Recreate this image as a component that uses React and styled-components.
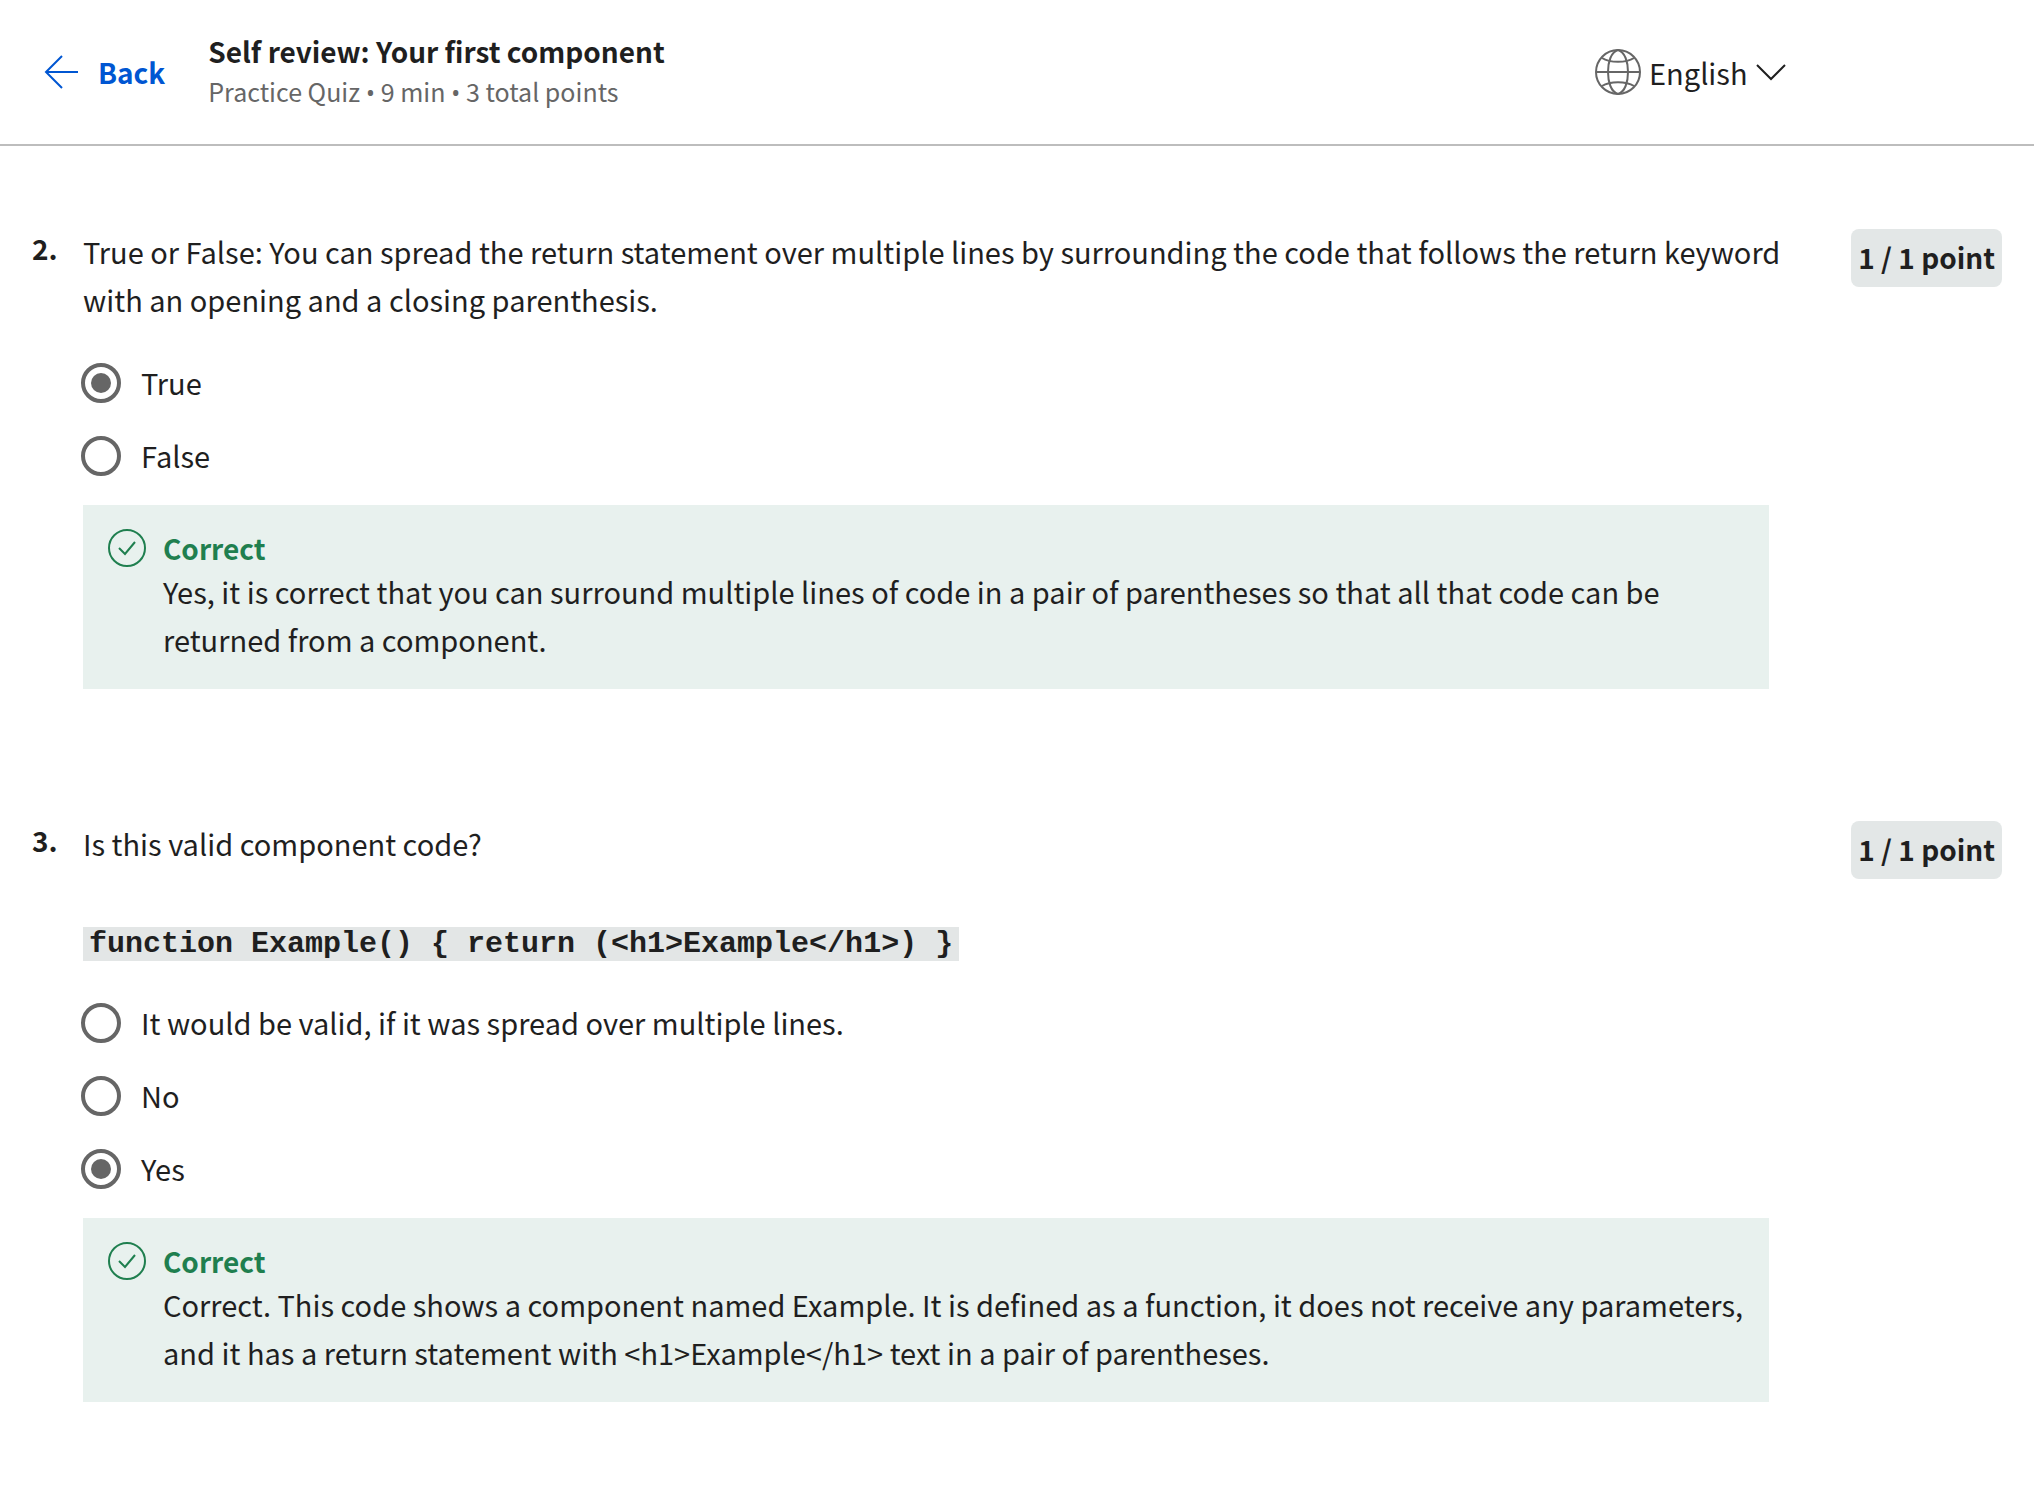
import React from "react";
import styled, { createGlobalStyle } from "styled-components";

const ink = "#1f1f1f";
const muted = "#666666";
const green = "#1f7f4f";

const GlobalStyle = createGlobalStyle`
  *, *::before, *::after { box-sizing: border-box; }
  body {
    margin: 0;
    background: #ffffff;
    color: ${ink};
    font-family: "Noto Sans CJK SC", "Noto Sans", sans-serif;
    font-size: 29px;
    line-height: 48px;
  }
`;

const Header = styled.header`
  display: flex;
  align-items: center;
  padding: 32px 248px 32px 44px;
  border-bottom: 2px solid #bdbdbd;
`;

const BackLink = styled.a`
  display: flex;
  align-items: center;
  gap: 18px;
  margin-right: 43px;
  color: #0056d2;
  font-size: 28px;
  font-weight: 600;
  text-decoration: none;
`;

const Heading = styled.div`
  flex: 1;
  min-width: 0;
`;

const Title = styled.h1`
  margin: 0;
  font-size: 28px;
  font-weight: 600;
  line-height: 38px;
`;

const Subtitle = styled.p`
  margin: 0;
  color: ${muted};
  font-size: 25px;
  line-height: 42px;
`;

const Bullet = styled.span`
  font-family: "Open Sans", sans-serif;
  line-height: 24px;
`;

const Language = styled.label`
  display: flex;
  align-items: center;
  gap: 8px;
`;

const SelectBox = styled.span`
  display: grid;
  align-items: center;
  justify-items: end;

  > * { grid-area: 1 / 1; }
  > svg { pointer-events: none; }
`;

const Select = styled.select`
  appearance: none;
  height: 48px;
  padding: 0 38px 0 0;
  border: 0;
  background: transparent;
  color: ${ink};
  font: inherit;
`;

const Questions = styled.main`
  display: flex;
  flex-direction: column;
  gap: 130px;
  padding: 81px 32px 112px;
`;

const Question = styled.section`
  display: grid;
  grid-template-columns: 51px minmax(0, 1fr) auto;
  align-items: start;
`;

const Number = styled.span`
  font-size: 28px;
  font-weight: 600;
  line-height: 42px;
`;

const Fields = styled.fieldset`
  display: flex;
  flex-direction: column;
  min-width: 0;
  margin: 0;
  padding: 0;
  border: 0;
`;

const Prompt = styled.legend`
  display: block;
  margin-bottom: 40px;
  padding: 0;
`;

const Line = styled.span`
  display: block;

  & + & { margin-top: 48px; }
`;

const Code = styled.code`
  padding: 0 6px;
  background: #e3e6e6;
  font-family: "Liberation Mono", "Courier New", monospace;
  font-size: 30px;
  font-weight: 700;
  line-height: 32px;
`;

const Options = styled.div`
  display: flex;
  flex-direction: column;
  align-items: start;
  gap: 33px;
  margin-bottom: 29px;
`;

const Option = styled.label`
  display: flex;
  align-items: start;
  gap: 20px;
  margin-left: -2px;
  line-height: 38px;
`;

const Radio = styled.input`
  appearance: none;
  flex: none;
  width: 40px;
  height: 40px;
  margin: 0;
  padding: 6px;
  border: 4px solid ${muted};
  border-radius: 50%;

  &:checked {
    background: ${muted} content-box;
  }
`;

const Points = styled.strong`
  margin: 2px 0 0 58px;
  padding: 4px 7px 6px;
  border-radius: 8px;
  background: #e3e7e7;
  font-size: 28px;
  font-weight: 600;
`;

const Feedback = styled.div`
  display: grid;
  grid-template-columns: 38px minmax(0, 1fr);
  gap: 17px;
  margin-right: 24px;
  padding: 24px 16px 26px 25px;
  background: #e8f1ee;
`;

const Verdict = styled.p`
  margin: 0;
  color: ${green};
  font-size: 28px;
  font-weight: 600;
  line-height: 38px;
`;

const Explanation = styled.p`
  margin: 0;
`;

const ArrowIcon = () => (
  <svg width="36" height="36" viewBox="0 0 36 36" fill="none" stroke="#0056d2" strokeWidth="2" aria-hidden="true">
    <path d="M34 18H2M18 2 2 18l16 16" />
  </svg>
);

const GlobeIcon = () => (
  <svg width="46" height="46" viewBox="0 0 46 46" fill="none" stroke="#666666" strokeWidth="2" aria-hidden="true">
    <circle cx="23" cy="23" r="22" />
    <path d="M1 23h44M7 9c8 5 24 5 32 0M7 37c8-5 24-5 32 0" />
    <path d="M23 1C16 3 13 13 13 23s3 20 10 22M23 1c7 2 10 12 10 22s-3 20-10 22" />
  </svg>
);

const ChevronIcon = () => (
  <svg width="30" height="18" viewBox="0 0 30 18" fill="none" stroke="#1f1f1f" strokeWidth="2" aria-hidden="true">
    <path d="m1 2 14 14L29 2" />
  </svg>
);

const CheckIcon = () => (
  <svg width="38" height="38" viewBox="0 0 38 38" fill="none" stroke={green} strokeWidth="2" aria-hidden="true">
    <circle cx="19" cy="19" r="18" />
    <path d="m11 19 6 6 10-12" />
  </svg>
);

const questions = [
  {
    number: 2,
    prompt:
      "True or False: You can spread the return statement over multiple lines by surrounding the code that follows the return keyword with an opening and a closing parenthesis.",
    options: ["True", "False"],
    answer: "True",
    explanation:
      "Yes, it is correct that you can surround multiple lines of code in a pair of parentheses so that all that code can be returned from a component.",
  },
  {
    number: 3,
    prompt: "Is this valid component code?",
    code: "function Example() { return (<h1>Example</h1>) }",
    options: ["It would be valid, if it was spread over multiple lines.", "No", "Yes"],
    answer: "Yes",
    explanation:
      "Correct. This code shows a component named Example. It is defined as a function, it does not receive any parameters, and it has a return statement with <h1>Example</h1> text in a pair of parentheses.",
  },
];

export default function App() {
  return (
    <>
      <GlobalStyle />
      <Header>
        <BackLink href="#back">
          <ArrowIcon />
          Back
        </BackLink>
        <Heading>
          <Title>Self review: Your first component</Title>
          <Subtitle>
            Practice Quiz <Bullet>•</Bullet> 9 min <Bullet>•</Bullet> 3 total points
          </Subtitle>
        </Heading>
        <Language>
          <GlobeIcon />
          <SelectBox>
            <Select aria-label="Language" defaultValue="en">
              <option value="en">English</option>
            </Select>
            <ChevronIcon />
          </SelectBox>
        </Language>
      </Header>
      <Questions>
        {questions.map((q) => (
          <Question key={q.number}>
            <Number>{q.number}.</Number>
            <Fields>
              <Prompt>
                <Line>{q.prompt}</Line>
                {q.code && (
                  <Line>
                    <Code>{q.code}</Code>
                  </Line>
                )}
              </Prompt>
              <Options>
                {q.options.map((option) => (
                  <Option key={option}>
                    <Radio type="radio" name={`question-${q.number}`} defaultChecked={option === q.answer} />
                    {option}
                  </Option>
                ))}
              </Options>
              <Feedback>
                <CheckIcon />
                <div>
                  <Verdict>Correct</Verdict>
                  <Explanation>{q.explanation}</Explanation>
                </div>
              </Feedback>
            </Fields>
            <Points>1 / 1 point</Points>
          </Question>
        ))}
      </Questions>
    </>
  );
}
